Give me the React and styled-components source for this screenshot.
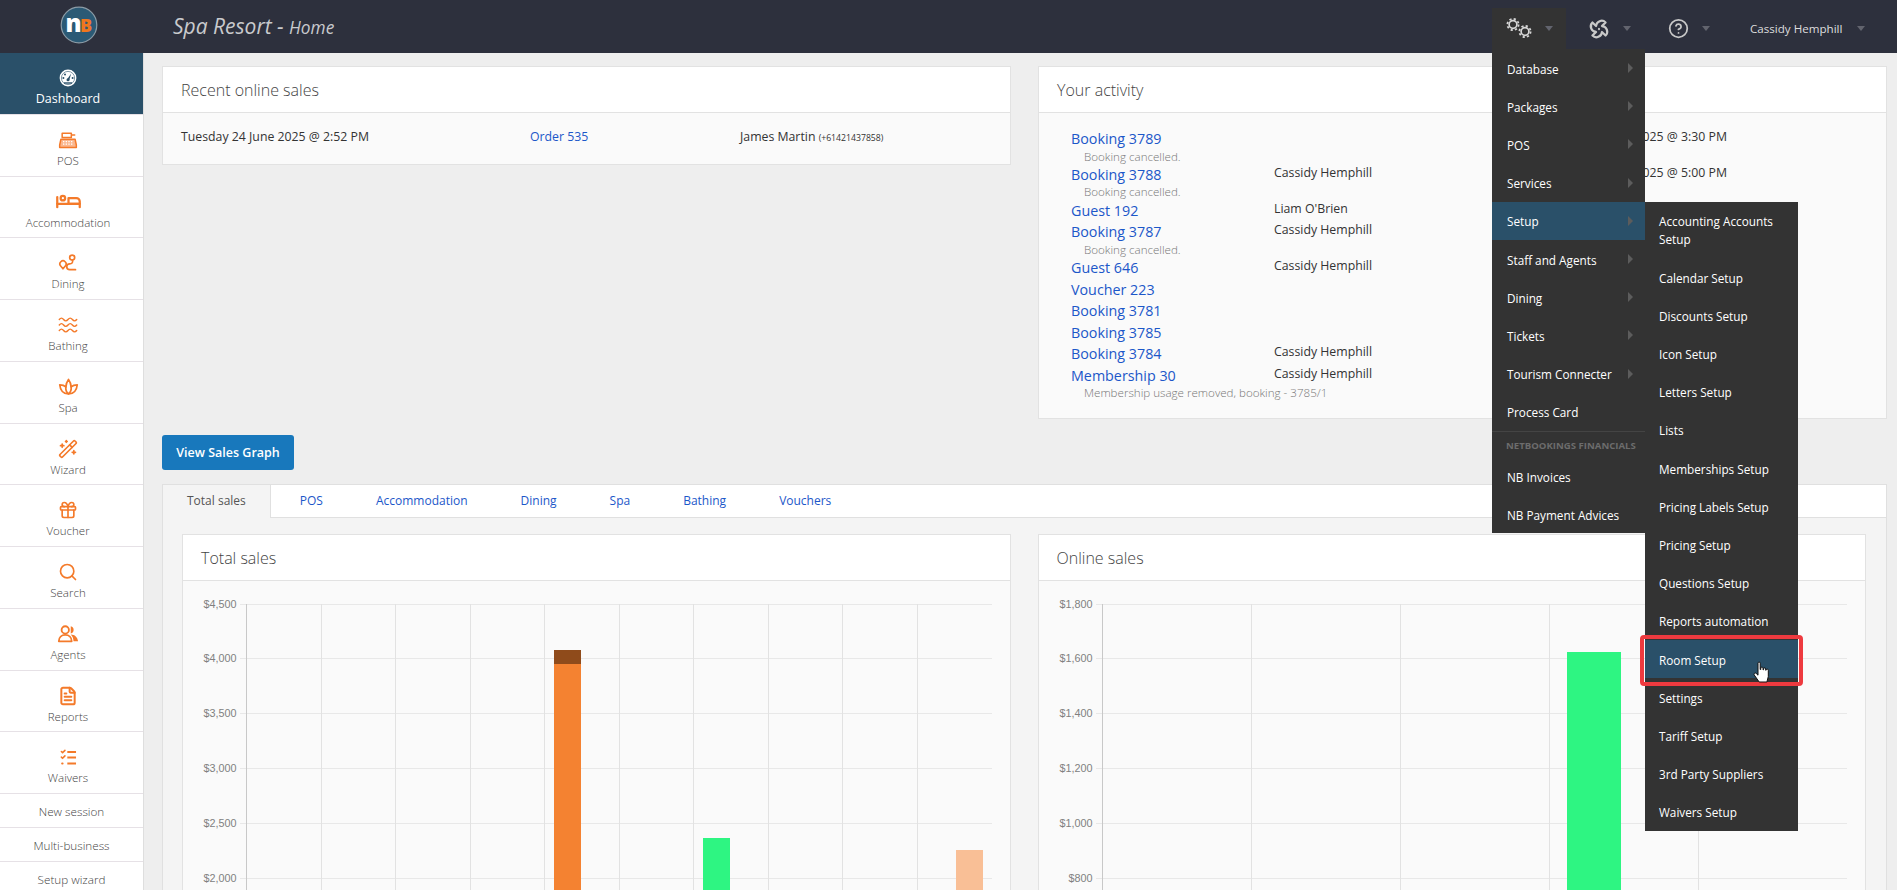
import React from 'react';
import styled, { createGlobalStyle } from 'styled-components';
import { Fan, CircleHelp, Gift, Search, WandSparkles, FileText } from 'lucide-react';
import { TbBed } from 'react-icons/tb';

const GlobalStyle = createGlobalStyle`
  html, body {
    margin: 0;
    padding: 0;
    height: 100%;
    overflow: hidden;
    background: #eeeeee;
    font-family: "Open Sans", "Liberation Sans", sans-serif;
    font-size: 12.3px;
    color: #333;
  }
  * { box-sizing: border-box; }
`;

const Page = styled.div`
  height: 890px;
  overflow: hidden;
  display: flex;
  flex-direction: column;
`;

const TopBar = styled.header`
  height: 53px;
  flex: none;
  display: flex;
  align-items: center;
  padding-top: 4px;
  background: #2d303d;
`;

const Brand = styled.div`
  width: 144px;
  flex: none;
  display: flex;
  justify-content: center;
  margin-top: -8px;
  padding-left: 13px;
`;

const Title = styled.h1`
  margin: -6px 0 0 29px;
  font-size: 21px;
  font-weight: 400;
  font-style: italic;
  color: #c9cacd;
  small { font-size: 17.3px; }
`;

const Nav = styled.nav`
  margin-left: auto;
  display: flex;
  padding-right: 32px;
`;

const NavItem = styled.div`
  position: relative;
  height: 41px;
  display: flex;
  align-items: center;
  gap: ${(p) => p.$gap || 13}px;
  padding: 0 ${(p) => (p.$last ? 0 : 13)}px 0 ${(p) => p.$left || 22}px;
  color: #c8c8c8;
  background: ${(p) => (p.$open ? '#333333' : 'transparent')};
`;

const Caret = styled.span`
  width: 0;
  height: 0;
  border-left: 4.5px solid transparent;
  border-right: 4.5px solid transparent;
  border-top: 5px solid #62646e;
`;

const Pinwheel = styled(Fan)`
  transform: rotate(30deg);
`;

const UserName = styled.span`
  width: 93px;
  font-size: 11.6px;
  font-weight: 500;
  white-space: nowrap;
  color: #dddddd;
`;

const Menu = styled.ul`
  position: absolute;
  top: 100%;
  left: 0;
  width: 153px;
  margin: 0;
  padding: 0;
  list-style: none;
  background: #333333;
  z-index: 5;
`;

const SubMenu = styled(Menu)`
  top: 0;
  left: 100%;
`;

const MenuItem = styled.li`
  position: relative;
  padding: 10.7px ${(p) => (p.$sub ? '14px' : '15px')} 9.5px;
  line-height: 18px;
  font-size: 11.75px;
  color: #fff;
  background: ${(p) => (p.$active ? '#2a5069' : 'transparent')};
`;

const MenuArrow = styled.span`
  position: absolute;
  right: 12px;
  top: 14px;
  border-top: 5px solid transparent;
  border-bottom: 5px solid transparent;
  border-left: 5px solid #5c5c5c;
`;

const MenuHeader = styled.li`
  height: 26px;
  padding-left: 14px;
  border-top: 1px solid #444;
  font-size: 9.6px;
  line-height: 28px;
  font-weight: 700;
  color: #6c6c6c;
  white-space: nowrap;
`;

const RedOutline = styled.span`
  position: absolute;
  inset: -5px -5px -8px -5px;
  border: 4.5px solid #ee3a3f;
  border-radius: 4px;
`;

const HandCursor = styled.svg`
  position: absolute;
  left: 108px;
  top: 21px;
  z-index: 2;
`;

const Body = styled.div`
  flex: 1;
  display: flex;
  min-height: 0;
`;

const Sidebar = styled.aside`
  width: 144px;
  flex: none;
  background: #fff;
  border-right: 1px solid #dedede;
`;

const SideLink = styled.div`
  height: 61.75px;
  padding: 14px 7px 0 0;
  display: flex;
  flex-direction: column;
  align-items: center;
  border-bottom: 1px solid #e6e1e6;
  color: ${(p) => (p.$active ? '#fff' : '#444')};
  background: ${(p) => (p.$active ? '#2a5069' : '#fff')};
`;

const SideIcon = styled.span`
  height: 22px;
  display: flex;
  align-items: center;
  color: #f47a2a;
`;

const SideLabel = styled.span`
  margin-top: 1px;
  line-height: 18px;
  font-size: ${(p) => (p.$active ? 12.5 : 11.5)}px;
  font-weight: ${(p) => (p.$active ? 400 : 300)};
`;

const SideSmall = styled.div`
  height: 34px;
  line-height: 35px;
  text-align: center;
  font-size: 11.7px;
  font-weight: 300;
  color: #444;
  border-bottom: 1px solid #e6e1e6;
`;

const Main = styled.main`
  flex: 1;
  min-width: 0;
  padding: 13px 10px 0 18px;
`;

const TwoCols = styled.div`
  display: grid;
  grid-template-columns: 1fr 1fr;
  column-gap: 27px;
  align-items: start;
`;

const Panel = styled.section`
  border: 1px solid #e2e2e2;
  background: #fafafa;
`;

const PanelHead = styled.h2`
  margin: 0;
  height: 46px;
  padding-left: 18px;
  border-bottom: 1px solid #e2e2e2;
  background: #fff;
  font-size: 16px;
  font-weight: 300;
  line-height: 46px;
  color: #444;
`;

const SaleRow = styled.div`
  height: 51px;
  padding: 14px 18px 0;
  display: grid;
  grid-template-columns: 349px 210px 1fr;
  line-height: 20px;
  color: #333;
  small { font-size: 8.7px; }
`;

const Link = styled.a`
  color: #1c57c9;
`;

const ActivityList = styled.div`
  padding: 15px 18px 17px 32px;
`;

const ActivityRow = styled.div`
  display: grid;
  grid-template-columns: 203px 265px 1fr;
`;

const ActivityLink = styled(Link)`
  display: block;
  font-size: 14.3px;
  line-height: 21.5px;
`;

const ActivityNote = styled.div`
  padding-left: 13px;
  font-size: 11.6px;
  font-weight: 300;
  line-height: 14.4px;
  white-space: nowrap;
  color: #777;
`;

const ActivityCell = styled.div`
  margin-top: -2px;
  line-height: 21.5px;
  color: #333;
`;

const GraphButton = styled.button`
  display: block;
  width: 132px;
  height: 35px;
  margin-top: 16px;
  border: none;
  border-radius: 3px;
  background: #1878bc;
  color: #fff;
  font-family: inherit;
  font-size: 12.5px;
  font-weight: 600;
`;

const TabBox = styled.div`
  margin-top: 14px;
  border: 1px solid #e0e0e0;
  background: #f4f4f4;
`;

const TabList = styled.div`
  height: 33px;
  display: flex;
  gap: 5px;
  background: #fff;
  border-bottom: 1px solid #e0e0e0;
`;

const Tab = styled.div`
  height: ${(p) => (p.$active ? 33 : 32)}px;
  padding: 0 24px;
  line-height: 32px;
  font-size: 12px;
  color: ${(p) => (p.$active ? '#555' : '#1c57c9')};
  background: ${(p) => (p.$active ? '#f4f4f4' : '#fff')};
  border-right: ${(p) => (p.$active ? '1px solid #e0e0e0' : 'none')};
`;

const TabContent = styled.div`
  padding: 16px 20px 0 19px;
`;

const NO_BARS = [];

const Chart = ({ axis, step, count, end, labels, bars = NO_BARS }) => {
  const gridY = [23, 77, 132, 187, 242, 297];
  return (
    <svg width="100%" height="340" style={{ display: 'block' }} shapeRendering="crispEdges">
      {gridY.map((y, i) => (
        <React.Fragment key={y}>
          <line x1={axis - 7} x2={end} y1={y} y2={y} stroke="#e8e8e8" />
          <text
            x={axis - 10}
            y={y + 4}
            textAnchor="end"
            fontFamily="Liberation Sans, Arial, sans-serif"
            fontSize="10.8"
            fill="#808080"
            shapeRendering="auto"
          >
            {labels[i]}
          </text>
        </React.Fragment>
      ))}
      {Array.from({ length: count }, (_, i) => (
        <line
          key={i}
          x1={axis + step * i}
          x2={axis + step * i}
          y1={23}
          y2={340}
          stroke={i === 0 ? '#c8c8c8' : '#e2e2e2'}
        />
      ))}
      {bars.map((b) => (
        <rect key={b.y} x={b.x} y={b.y} width={b.w} height={340 - b.y} fill={b.fill} />
      ))}
    </svg>
  );
};

const Logo = () => (
  <svg width="38" height="38" viewBox="0 0 38 38">
    <circle cx="19" cy="19" r="17.8" fill="#2b5a75" stroke="#8b9ba6" strokeWidth="1.2" />
    <text x="5.500" y="25.500" fontFamily="Open Sans, sans-serif" fontWeight="800" fontSize="24" fill="#fff">n</text>
    <text x="20" y="25.500" fontFamily="Open Sans, sans-serif" fontWeight="800" fontSize="18" fill="#f0761e">B</text>
  </svg>
);

const Gear = ({ cx, cy }) => (
  <g fill="none" stroke="#d6d6d6">
    <circle cx={cx} cy={cy} r="3.900" strokeWidth="1.700" />
    <circle cx={cx} cy={cy} r="5.600" strokeWidth="1.800" strokeDasharray="2.200 2.200" />
  </g>
);

const Gears = () => (
  <svg width="29" height="24" viewBox="0 0 29 24">
    <Gear cx={9} cy={7.500} />
    <Gear cx={21} cy={14.500} />
  </svg>
);

const orange = { fill: 'none', stroke: 'currentColor', strokeWidth: 2, strokeLinecap: 'round', strokeLinejoin: 'round' };

const DashboardIcon = () => (
  <svg width="18" height="18" viewBox="0 0 18 18">
    <circle cx="9" cy="9" r="8.400" fill="#fff" />
    <circle cx="9" cy="9" r="6.600" fill="none" stroke="#2a5069" strokeWidth="0.600" />
    <path d="M8 10.600 12.200 4.600 10.200 11.200Z" fill="#2a5069" />
    <circle cx="9" cy="10.800" r="1.500" fill="#2a5069" />
    <circle cx="4.400" cy="9" r="1" fill="#2a5069" />
    <circle cx="6" cy="5.400" r="1" fill="#2a5069" />
    <circle cx="13.600" cy="9" r="1" fill="#2a5069" />
    <path d="M5 14h8" stroke="#2a5069" strokeWidth="1.400" />
  </svg>
);

const RegisterIcon = () => (
  <svg width="20" height="20" viewBox="0 0 24 24" {...orange}>
    <path d="M5 4h11v5H5z" strokeWidth="1.800" />
    <path d="M17 6h3" strokeWidth="1.800" />
    <path d="M3.500 11h17l1.500 7v3H2v-3z" fill="#fbb78e" strokeWidth="1.800" />
    <path d="M6 14h12M6 17h12" stroke="#fff" strokeWidth="1.600" strokeDasharray="1.600 1.600" strokeLinecap="butt" />
  </svg>
);

const RouteIcon = () => (
  <svg width="20" height="20" viewBox="0 0 24 24" {...orange}>
    <circle cx="17" cy="5.500" r="3" />
    <path d="M6 19l-2.800-3.400a3.700 3.700 0 1 1 5.600 0z" />
    <path d="M17.500 8.500c.5 3.500-1 4.500-3.500 4.500s-3.500 1-3.500 3.500 1.500 3.500 3.500 3.500h7" />
  </svg>
);

const WavesIcon = () => (
  <svg width="22" height="22" viewBox="0 0 24 24" {...orange} strokeWidth="1.600">
    {[6, 12, 18].map((y) => (
      <path key={y} d={`M2.500 ${y}c1.600-2 3.100-2 4.700 0s3.100 2 4.800 0 3.100-2 4.800 0 3.100 2 4.700 0`} />
    ))}
  </svg>
);

const LotusIcon = () => (
  <svg width="21" height="21" viewBox="0 0 24 24" {...orange}>
    <path d="M12 20.500c-6 0-9.500-4.500-10-10.500 3 0 5.500 1 7 2.500C9.300 9 10.500 6 12 4c1.500 2 2.700 5 3 8.500 1.500-1.500 4-2.500 7-2.500-.5 6-4 10.500-10 10.500z" />
    <path d="M12 20.500c-2.500-2-3.500-4.500-3-8M12 20.500c2.500-2 3.500-4.500 3-8" />
  </svg>
);

const AgentsIcon = () => (
  <svg width="22" height="22" viewBox="0 0 24 24" {...orange}>
    <circle cx="9" cy="7.500" r="4" />
    <path d="M2 20c0-4.500 3-7 7-7s7 2.500 7 7z" />
    <path d="M15 3.600a4 4 0 0 1 0 7.800z" fill="currentColor" stroke="none" />
    <path d="M15 12.500c4.500 0 7.500 3 8 7.500h-5c0-3-1-5.500-3-7.500z" fill="currentColor" stroke="none" />
  </svg>
);

const ChecklistIcon = () => (
  <svg width="19" height="19" viewBox="0 0 24 24" {...orange}>
    <path d="M3 4.500l1.500 1.500 3-3M3 11.500l1.500 1.500 3-3" />
    <path d="M4 19.500h.5" strokeWidth="2.600" />
    <path d="M10.500 5h11M10.500 12h11M10.500 19.500h11" strokeWidth="2.600" strokeLinecap="butt" />
  </svg>
);

const sideLinks = [
  { label: 'Dashboard', icon: <DashboardIcon />, active: true },
  { label: 'POS', icon: <RegisterIcon /> },
  { label: 'Accommodation', icon: <TbBed size={27} /> },
  { label: 'Dining', icon: <RouteIcon /> },
  { label: 'Bathing', icon: <WavesIcon /> },
  { label: 'Spa', icon: <LotusIcon /> },
  { label: 'Wizard', icon: <WandSparkles size={20} strokeWidth={2} /> },
  { label: 'Voucher', icon: <Gift size={20} strokeWidth={2} /> },
  { label: 'Search', icon: <Search size={20} strokeWidth={2} /> },
  { label: 'Agents', icon: <AgentsIcon /> },
  { label: 'Reports', icon: <FileText size={20} strokeWidth={2.4} /> },
  { label: 'Waivers', icon: <ChecklistIcon /> },
];

const sideSmall = ['New session', 'Multi-business', 'Setup wizard'];

const mainMenu = ['Database', 'Packages', 'POS', 'Services', 'Setup', 'Staff and Agents', 'Dining', 'Tickets', 'Tourism Connecter'];

const setupMenu = [
  'Accounting Accounts Setup',
  'Calendar Setup',
  'Discounts Setup',
  'Icon Setup',
  'Letters Setup',
  'Lists',
  'Memberships Setup',
  'Pricing Labels Setup',
  'Pricing Setup',
  'Questions Setup',
  'Reports automation',
  'Room Setup',
  'Settings',
  'Tariff Setup',
  '3rd Party Suppliers',
  'Waivers Setup',
];

const activity = [
  { link: 'Booking 3789', note: 'Booking cancelled.', when: 'Tuesday 24 June 2025 @ 3:30 PM' },
  { link: 'Booking 3788', note: 'Booking cancelled.', who: 'Cassidy Hemphill', when: 'Tuesday 24 June 2025 @ 5:00 PM' },
  { link: 'Guest 192', who: "Liam O'Brien" },
  { link: 'Booking 3787', note: 'Booking cancelled.', who: 'Cassidy Hemphill' },
  { link: 'Guest 646', who: 'Cassidy Hemphill' },
  { link: 'Voucher 223' },
  { link: 'Booking 3781' },
  { link: 'Booking 3785' },
  { link: 'Booking 3784', who: 'Cassidy Hemphill' },
  { link: 'Membership 30', note: 'Membership usage removed, booking - 3785/1', who: 'Cassidy Hemphill' },
];

const tabs = ['Total sales', 'POS', 'Accommodation', 'Dining', 'Spa', 'Bathing', 'Vouchers'];

const totalBars = [
  { x: 371, y: 69, w: 27, fill: '#8f4b1b' },
  { x: 371, y: 83, w: 27, fill: '#f48231' },
  { x: 520, y: 257, w: 27, fill: '#2ef582' },
  { x: 773, y: 269, w: 27, fill: '#f9bf96' },
];

const onlineBars = [{ x: 528, y: 71, w: 54, fill: '#2ef582' }];

export default function App() {
  return (
    <Page>
      <GlobalStyle />
      <TopBar>
        <Brand>
          <Logo />
        </Brand>
        <Title>
          Spa Resort - <small>Home</small>
        </Title>
        <Nav>
          <NavItem $open $left={12} $gap={12}>
            <Gears />
            <Caret />
            <Menu>
              {mainMenu.map((name) => (
                <MenuItem key={name} $active={name === 'Setup'}>
                  {name}
                  <MenuArrow />
                  {name === 'Setup' && (
                    <SubMenu>
                      {setupMenu.map((sub) => (
                        <MenuItem key={sub} $sub $active={sub === 'Room Setup'}>
                          {sub}
                          {sub === 'Room Setup' && (
                            <>
                              <RedOutline />
                              <HandCursor width="18" height="22" viewBox="0 0 18 22">
                                <path
                                  d="M5 2.200a1.100 1.100 0 0 1 2.200 0v6.300h.6V7.200a1.100 1.100 0 0 1 2.200 0v1.600h.5V8a1.100 1.100 0 0 1 2.200 0v1.200h.4a1.100 1.100 0 0 1 2.200 0v6.300l-1.400 5.500H6.200L1.100 13.800a1.300 1.300 0 0 1 2-1.500L5 14.200z"
                                  fill="#fff"
                                  stroke="#111"
                                  strokeWidth="1"
                                />
                              </HandCursor>
                            </>
                          )}
                        </MenuItem>
                      ))}
                    </SubMenu>
                  )}
                </MenuItem>
              ))}
              <MenuItem>Process Card</MenuItem>
              <MenuHeader>NETBOOKINGS FINANCIALS</MenuHeader>
              <MenuItem>NB Invoices</MenuItem>
              <MenuItem>NB Payment Advices</MenuItem>
            </Menu>
          </NavItem>
          <NavItem>
            <Pinwheel size={22} strokeWidth={2.4} />
            <Caret />
          </NavItem>
          <NavItem $left={24}>
            <CircleHelp size={21} strokeWidth={2} />
            <Caret />
          </NavItem>
          <NavItem $left={27} $gap={14} $last>
            <UserName>Cassidy Hemphill</UserName>
            <Caret />
          </NavItem>
        </Nav>
      </TopBar>
      <Body>
        <Sidebar>
          {sideLinks.map((item) => (
            <SideLink key={item.label} $active={item.active}>
              <SideIcon>{item.icon}</SideIcon>
              <SideLabel $active={item.active}>{item.label}</SideLabel>
            </SideLink>
          ))}
          {sideSmall.map((name) => (
            <SideSmall key={name}>{name}</SideSmall>
          ))}
        </Sidebar>
        <Main>
          <TwoCols>
            <Panel>
              <PanelHead>Recent online sales</PanelHead>
              <SaleRow>
                <span>Tuesday 24 June 2025 @ 2:52 PM</span>
                <Link>Order 535</Link>
                <span>
                  James Martin <small>(+61421437858)</small>
                </span>
              </SaleRow>
            </Panel>
            <Panel>
              <PanelHead>Your activity</PanelHead>
              <ActivityList>
                {activity.map((row) => (
                  <ActivityRow key={row.link}>
                    <div>
                      <ActivityLink>{row.link}</ActivityLink>
                      {row.note && <ActivityNote>{row.note}</ActivityNote>}
                    </div>
                    <ActivityCell>{row.who}</ActivityCell>
                    <ActivityCell>{row.when}</ActivityCell>
                  </ActivityRow>
                ))}
              </ActivityList>
            </Panel>
          </TwoCols>
          <GraphButton>View Sales Graph</GraphButton>
          <TabBox>
            <TabList>
              {tabs.map((name, i) => (
                <Tab key={name} $active={i === 0}>
                  {name}
                </Tab>
              ))}
            </TabList>
            <TabContent>
              <TwoCols>
                <Panel>
                  <PanelHead>Total sales</PanelHead>
                  <Chart
                    axis={63.5}
                    step={74.5}
                    count={10}
                    end={809}
                    labels={['$4,500', '$4,000', '$3,500', '$3,000', '$2,500', '$2,000']}
                    bars={totalBars}
                  />
                </Panel>
                <Panel>
                  <PanelHead>Online sales</PanelHead>
                  <Chart
                    axis={63.5}
                    step={149}
                    count={5}
                    end={808}
                    labels={['$1,800', '$1,600', '$1,400', '$1,200', '$1,000', '$800']}
                    bars={onlineBars}
                  />
                </Panel>
              </TwoCols>
            </TabContent>
          </TabBox>
        </Main>
      </Body>
    </Page>
  );
}
